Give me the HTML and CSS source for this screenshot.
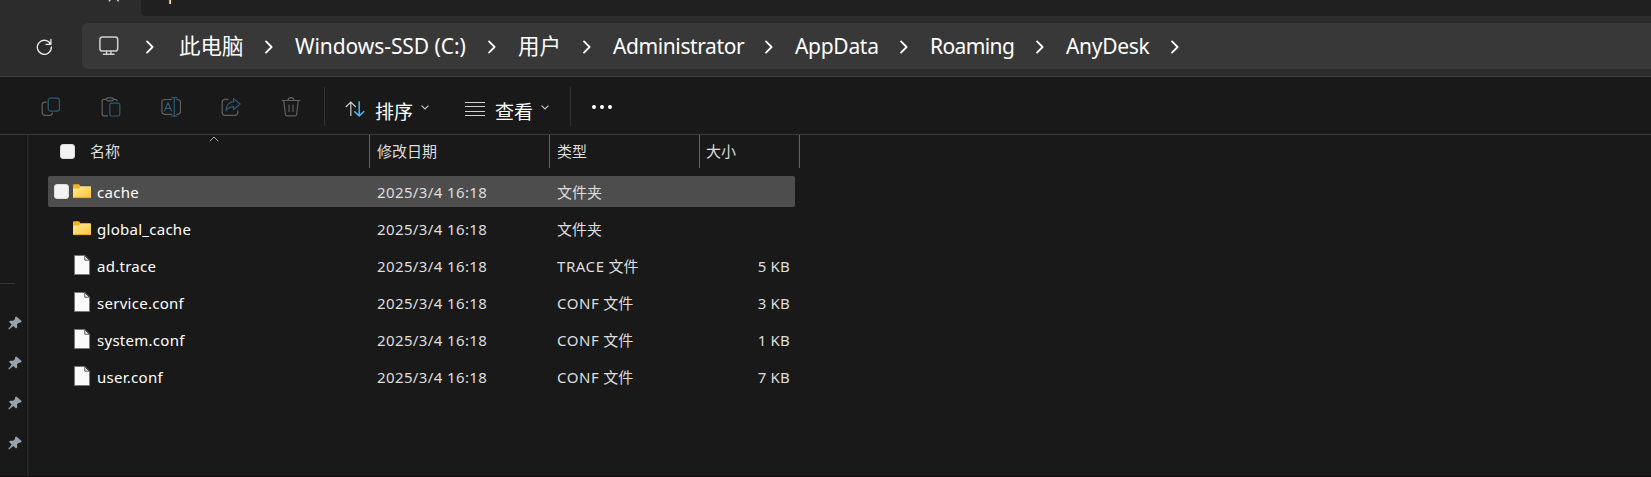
FILE: index.html
```html
<!DOCTYPE html>
<html lang="zh-CN">
<head>
<meta charset="utf-8">
<title>AnyDesk</title>
<link rel="stylesheet" href="styles.css">
</head>
<body>
<svg class="defs" width="0" height="0">
  <symbol id="chev" viewBox="0 0 12 16"><path d="M3 2.4 8.6 8 3 13.6" fill="none" stroke="#fff" stroke-width="1.8" stroke-linecap="round" stroke-linejoin="round"/></symbol>
  <symbol id="down" viewBox="0 0 8 6"><path d="M1 1.4 4 4.2 7 1.4" fill="none" stroke="#c4c4c4" stroke-width="1.1"/></symbol>
  <symbol id="folder" viewBox="0 0 18 15"><path d="M0 1.2Q0 .3.9.3H6l1.3 1.6V6H0z" fill="#f5b21a"/><path d="M0 4.4h6l1.5-2.1H17.2q.8 0 .8.8V14H0z" fill="url(#fg)"/><path d="M0 13.6h18" stroke="#e5a823" stroke-width=".9"/></symbol>
  <linearGradient id="fg" x1="0" y1="0" x2="1" y2="1"><stop offset="0" stop-color="#ffe9a2"/><stop offset="1" stop-color="#fdc62f"/></linearGradient>
  <symbol id="file" viewBox="0 0 16 20"><path d="M.5.5h10.3l4.7 4.7v14.3H.5z" fill="#fafafa" stroke="#777"/><path d="M10.8.8v4.4h4.4z" fill="#fff" stroke="#555"/></symbol>
  <symbol id="pin" viewBox="0 0 14 14"><path d="M8.300.400 13.600 4.900 13.200 6.200 10.400 6.900 9 8.600 9.300 11.200 8 12.500 5.300 10 1 13.500.300 12.900 3.600 8.500 1 6 2 4.800 5.200 4.700 6.800 3.200 7.200 1z" fill="#98a3a9"/></symbol>
</svg>
<div class="window">
  <div class="tabs"><div class="tab-active"><svg class="tab-glyph" viewBox="0 0 12 2"><path d="M.8 1.3 2.3 0M9.200 0l1.500 1.300" fill="none" stroke="#ddd" stroke-width="1.3"/></svg></div><div class="tab-other"><span class="tab-letter">p</span></div></div>
  <div class="nav">
    <svg class="refresh" viewBox="0 0 18 18"><path d="M15.6 6.2A7 7 0 1 0 16.3 9M15.9 1.4v4.9h-4.9" fill="none" stroke="#eee" stroke-width="1.3" stroke-linecap="round" stroke-linejoin="round"/></svg>
    <div class="address">
      <svg class="pc" viewBox="0 0 20 20"><rect x=".9" y=".9" width="17.8" height="14.2" rx="2.6" fill="none" stroke="#d0d0d0" stroke-width="1.5"/><path d="M7.6 15.3v2.6M12 15.3v2.6M4.4 18.2H15" fill="none" stroke="#d0d0d0" stroke-width="1.4" stroke-linecap="round"/></svg>
      <svg class="chev first"><use href="#chev"/></svg><span class="crumb zh w-pc">此电脑</span>
      <svg class="chev"><use href="#chev"/></svg><span class="crumb w-drive">Windows-SSD (C:)</span>
      <svg class="chev"><use href="#chev"/></svg><span class="crumb zh w-users">用户</span>
      <svg class="chev"><use href="#chev"/></svg><span class="crumb w-admin">Administrator</span>
      <svg class="chev"><use href="#chev"/></svg><span class="crumb w-app">AppData</span>
      <svg class="chev"><use href="#chev"/></svg><span class="crumb w-roam">Roaming</span>
      <svg class="chev"><use href="#chev"/></svg><span class="crumb w-any">AnyDesk</span>
      <svg class="chev"><use href="#chev"/></svg>
    </div>
  </div>
  <div class="toolbar">
    <div class="tools">
      <svg viewBox="0 0 20 20"><path class="g" d="M5.3 5.2H4Q1.2 5.2 1.2 8v7.6q0 2.8 2.8 2.8h4.8q2.2 0 2.6-2.2"/><rect class="b" x="7.2" y="1.2" width="11.2" height="13" rx="2.6"/></svg>
      <svg viewBox="0 0 20 20"><path class="g" d="M5.5 2.3H3Q1.2 2.3 1.2 4v13q0 1.9 1.9 1.9h3.4M12.4 2.3h1.8q1.8 0 1.8 1.5"/><rect class="g" x="5.5" y=".8" width="6.9" height="3" rx="1.5"/><rect class="b" x="8.8" y="6.2" width="10" height="12.8" rx="1.8"/></svg>
      <svg viewBox="0 0 20 20"><path class="g" d="M10.8 2.5H3.6Q.9 2.5.9 5.2v9.4q0 2.7 2.7 2.7h7.2M15.8 2.5q3.7 0 3.7 3v8.8q0 3-3.7 3"/><path class="b" d="M3.4 14 7 5.5 10.6 14M4.7 11.3h4.6M10.8.6h5M10.8 19.2h5M13.3.6v18.6"/></svg>
      <svg viewBox="0 0 20 20"><path class="g" d="M7 2.4H4Q1.2 2.4 1.2 5.2v10.3q0 2.8 2.8 2.8h10q2.8 0 2.8-2.8v-1.7"/><path class="b" d="M12.6 1.6 19.1 7l-6.5 5.6V9.6Q8.6 9.3 5 13.5 5.6 5.2 12.6 4.6z"/></svg>
      <svg viewBox="0 0 20 20"><path class="g" d="M1 3.5h18M7 3.3Q7.3.7 10 .7t3 2.6M2.8 3.7 4.3 17.2q.2 1.7 1.9 1.7h7.6q1.7 0 1.9-1.7L17.2 3.7M8 8v6.5M12 8v6.5"/></svg>
    </div>
    <div class="sep"></div>
    <div class="sort"><svg class="sorticon" viewBox="0 0 20 18"><path d="M5.8 16V2.2M.8 7 5.8 2.1l5 4.9" fill="none" stroke="#ccc" stroke-width="1.2"/><path d="M14.2 1.3v14.5M9.2 11.2l5 4.7 5-4.7" fill="none" stroke="#4cb5ee" stroke-width="1.5"/></svg><span class="cmd">排序</span><svg class="down"><use href="#down"/></svg></div>
    <div class="view"><svg class="viewicon" viewBox="0 0 20 14"><path d="M0 .5h20M0 4.5h20M0 9.5h20M0 13.5h20" stroke="#d0d0d0" stroke-width="1"/></svg><span class="cmd">查看</span><svg class="down"><use href="#down"/></svg></div>
    <div class="sep"></div>
    <div class="more"><i></i><i></i><i></i></div>
  </div>
  <div class="body">
    <div class="side">
      <div class="rule"></div>
      <svg><use href="#pin"/></svg><svg><use href="#pin"/></svg><svg><use href="#pin"/></svg><svg><use href="#pin"/></svg>
    </div>
    <div class="split"></div>
    <div class="list">
      <div class="head">
        <div class="h-name"><i class="box"></i><span>名称</span><svg class="asc" viewBox="0 0 10 6"><path d="M.7 5.3 5 1l4.3 4.3" fill="none" stroke="#aaa"/></svg></div>
        <div>修改日期</div><div>类型</div><div>大小</div>
      </div>
      <div class="row hover"><i class="box"></i><svg class="ic"><use href="#folder"/></svg><b>cache</b><span class="date">2025/3/4 16:18</span><span class="type">文件夹</span><span class="size"></span></div>
      <div class="row"><i></i><svg class="ic"><use href="#folder"/></svg><b>global_cache</b><span class="date">2025/3/4 16:18</span><span class="type">文件夹</span><span class="size"></span></div>
      <div class="row"><i></i><svg class="ic doc"><use href="#file"/></svg><b>ad.trace</b><span class="date">2025/3/4 16:18</span><span class="type"><span class="ext">TRACE</span> 文件</span><span class="size">5 KB</span></div>
      <div class="row"><i></i><svg class="ic doc"><use href="#file"/></svg><b>service.conf</b><span class="date">2025/3/4 16:18</span><span class="type"><span class="ext">CONF</span> 文件</span><span class="size">3 KB</span></div>
      <div class="row"><i></i><svg class="ic doc"><use href="#file"/></svg><b>system.conf</b><span class="date">2025/3/4 16:18</span><span class="type"><span class="ext">CONF</span> 文件</span><span class="size">1 KB</span></div>
      <div class="row"><i></i><svg class="ic doc"><use href="#file"/></svg><b>user.conf</b><span class="date">2025/3/4 16:18</span><span class="type"><span class="ext">CONF</span> 文件</span><span class="size">7 KB</span></div>
    </div>
  </div>
</div>
</body>
</html>
```
FILE: styles.css
```css
* { box-sizing: border-box; }
body { margin: 0; background: #191919; color: #fff; font-family: "Noto Sans", "Noto Sans CJK SC", sans-serif; overflow: hidden; }
svg { display: block; flex: none; }
.defs { position: absolute; }
.window { width: 1651px; height: 477px; display: flex; flex-direction: column; overflow: hidden; border-bottom: 1px solid #10090c; }
.tabs { height: 16px; display: flex; background: #2c2c2c; flex: none; }
.tab-active { width: 141px; padding-left: 108px; }
.tab-glyph { width: 12px; height: 2px; }
.tab-other { flex: 1; background: #202020; border-bottom-left-radius: 5px; overflow: hidden; padding-left: 27px; }
.tab-letter { display: block; font-size: 16px; line-height: 20px; margin-top: -16px; }
.nav { height: 61px; background: #2c2c2c; border-bottom: 1px solid #404040; display: flex; align-items: center; flex: none; }
.refresh { width: 18px; height: 18px; margin: 1px 29px 0 35px; }
.address { flex: 1; height: 46px; background: #383838; border-radius: 6px 0 0 6px; display: flex; align-items: center; padding-left: 17px; }
.pc { width: 20px; height: 20px; margin-right: 25px; margin-top: -1px; }
.chev { width: 12px; height: 16px; margin-right: 20px; margin-top: 1px; }
.first { margin-right: 23px; }
.crumb { flex: none; font-size: 21px; line-height: 30px; white-space: nowrap; margin-right: 20px; }
.zh { font-size: 21.5px; }
.w-pc { width: 64px; }
.w-drive { width: 171px; letter-spacing: -.07px; }
.w-users { width: 43px; }
.w-admin { width: 130px; letter-spacing: -.4px; }
.w-app { width: 83px; letter-spacing: -.3px; }
.w-roam { width: 84px; letter-spacing: -.6px; }
.w-any { width: 83px; letter-spacing: -.3px; }
.toolbar { height: 58px; border-bottom: 1px solid #3b3b3b; display: flex; align-items: center; padding: 2px 0 0 41px; flex: none; }
.tools { display: flex; gap: 40px; }
.tools svg { width: 20px; height: 20px; }
.g, .b { fill: none; stroke: #606060; stroke-width: 1.2; stroke-linecap: round; stroke-linejoin: round; }
.b { stroke: #2b5a75; }
.sep { width: 1px; height: 39px; background: #303030; }
.tools + .sep { margin-left: 23px; }
.sort, .view { display: flex; align-items: center; }
.sort { margin-left: 20px; }
.view { margin-left: 35px; margin-right: 20px; }
.sorticon { width: 20px; height: 18px; margin-top: 5px; }
.viewicon { width: 20px; height: 14px; margin-top: 5px; }
.cmd { font-size: 19px; line-height: 26px; margin: 10px 7px 0 10px; }
.down { width: 10px; height: 7px; margin-top: 1px; }
.more { display: flex; gap: 4px; margin-left: 21px; }
.more i { width: 4px; height: 4px; border-radius: 50%; background: #fff; }
.body { flex: 1; display: flex; min-height: 0; }
.side { width: 26px; display: flex; flex-direction: column; padding-top: 148px; }
.rule { flex: none; width: 15px; height: 1px; background: #383838; margin-bottom: 32px; }
.side svg { width: 14px; height: 14px; margin: 0 0 26px 8px; }
.split { width: 3px; background: #292929; border-left: 1px solid #141414; border-right: 1px solid #202020; }
.list { width: 780px; font-size: 15px; }
.head { height: 33px; display: grid; grid-template-columns: 341px 180px 150px 100px; color: #dedede; margin-bottom: 8px; line-height: 33px; }
.head > div { border-right: 1px solid #636363; padding-left: 7px; }
.head > div:last-child { padding-left: 6px; }
.head .h-name { display: flex; padding-left: 31px; position: relative; }
.box { width: 15px; height: 15px; border: 1px solid #ddd; border-radius: 3px; background: #f3f3f3; }
.head .box { margin: 9px 15px 0 0; }
.asc { position: absolute; left: 180px; top: 1px; width: 10px; height: 6px; }
.row { width: 747px; height: 31px; margin: 0 0 6px 19px; display: grid; grid-template-columns: 15px 18px 286px 180px 150px 87px; padding-left: 6px; align-items: center; line-height: 31px; color: #dedede; border-radius: 2px; }
.hover { background: #4d4d4d; }
.row b { font-weight: 400; color: #fff; padding-left: 10px; letter-spacing: .27px; }
.ic { width: 18px; height: 15px; margin: -1px 0 0 4px; }
.doc { width: 16px; height: 20px; margin: -2px 0 0 5px; }
.row b, .date, .type, .size { padding-top: 2px; line-height: 29px; }
.date, .type { padding-left: 4px; }
.date { letter-spacing: .38px; }
.ext { letter-spacing: .55px; }
.size { text-align: right; letter-spacing: .2px; }
```
